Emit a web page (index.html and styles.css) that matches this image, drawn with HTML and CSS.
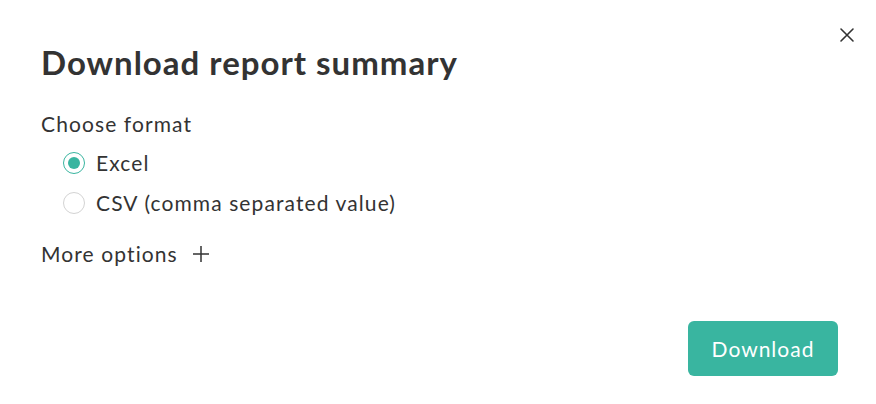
FILE: index.html
```html
<!DOCTYPE html>
<html lang="en">
  <head>
    <meta charset="utf-8" />
    <title>Download report summary</title>
    <link rel="stylesheet" href="styles.css">
  </head>
  <body>
    <div class="dialog">
      <button class="close-btn" aria-label="Close">
        <svg width="16" height="16" viewBox="0 0 16 16">
          <path d="M2 2 L14 14 M14 2 L2 14" stroke="#333" stroke-width="1.6" stroke-linecap="round" fill="none"/>
        </svg>
      </button>
      <h1 class="title">Download report summary</h1>

      <div class="section-label">Choose format</div>
      <div class="radio-list">
        <label class="radio-row">
          <span class="radio checked"><span class="dot"></span></span>
          <span>Excel</span>
        </label>
        <label class="radio-row">
          <span class="radio"></span>
          <span>CSV (comma separated value)</span>
        </label>
      </div>

      <div class="more-options">
        <span>More options</span>
        <svg width="18" height="18" viewBox="0 0 18 18">
          <path d="M9 1 V17 M1 9 H17" stroke="#333" stroke-width="1.5" fill="none"/>
        </svg>
      </div>

      <div class="footer">
        <button class="primary-btn">Download</button>
      </div>
    </div>
  </body>
</html>
```

FILE: styles.css
```css
body {
  margin: 0;
  font-family: Lato, "Noto Sans", sans-serif;
  background-color: #fff;
  color: #333;
}
.dialog {
  position: relative;
  width: 876px;
  height: 404px;
  box-sizing: border-box;
  padding: 41px 38px 0 41px;
}
.close-btn {
  position: absolute;
  top: 27px;
  right: 21px;
  border: none;
  background: none;
  padding: 0;
  cursor: pointer;
}
.title {
  margin: 0;
  font-size: 33px;
  font-weight: 700;
  letter-spacing: 1px;
  color: #333;
  line-height: 42px;
}
.section-label {
  margin-top: 27px;
  font-size: 21px;
  letter-spacing: 1.1px;
  line-height: 28px;
}
.radio-list {
  display: flex;
  flex-direction: column;
  gap: 12px;
  margin-top: 11px;
  padding-left: 22px;
}
.radio-row {
  display: flex;
  align-items: center;
  gap: 11px;
  font-size: 21px;
  letter-spacing: 1.1px;
  line-height: 28px;
}
.radio {
  width: 20px;
  height: 20px;
  border: 1px solid #d3d3d3;
  border-radius: 50%;
  display: flex;
  align-items: center;
  justify-content: center;
}
.radio.checked {
  border-color: #39b5a0;
}
.radio .dot {
  width: 12px;
  height: 12px;
  border-radius: 50%;
  background-color: #39b5a0;
}
.more-options {
  margin-top: 23px;
  display: flex;
  align-items: center;
  gap: 14px;
  font-size: 21px;
  letter-spacing: 1.1px;
  line-height: 28px;
}
.footer {
  display: flex;
  justify-content: flex-end;
  margin-top: 53px;
}
.primary-btn {
  width: 150px;
  height: 55px;
  background-color: #39b5a0;
  color: #fff;
  border: none;
  border-radius: 6px;
  font-family: Lato, "Noto Sans", sans-serif;
  font-size: 21px;
  letter-spacing: 1px;
  cursor: pointer;
}
```
